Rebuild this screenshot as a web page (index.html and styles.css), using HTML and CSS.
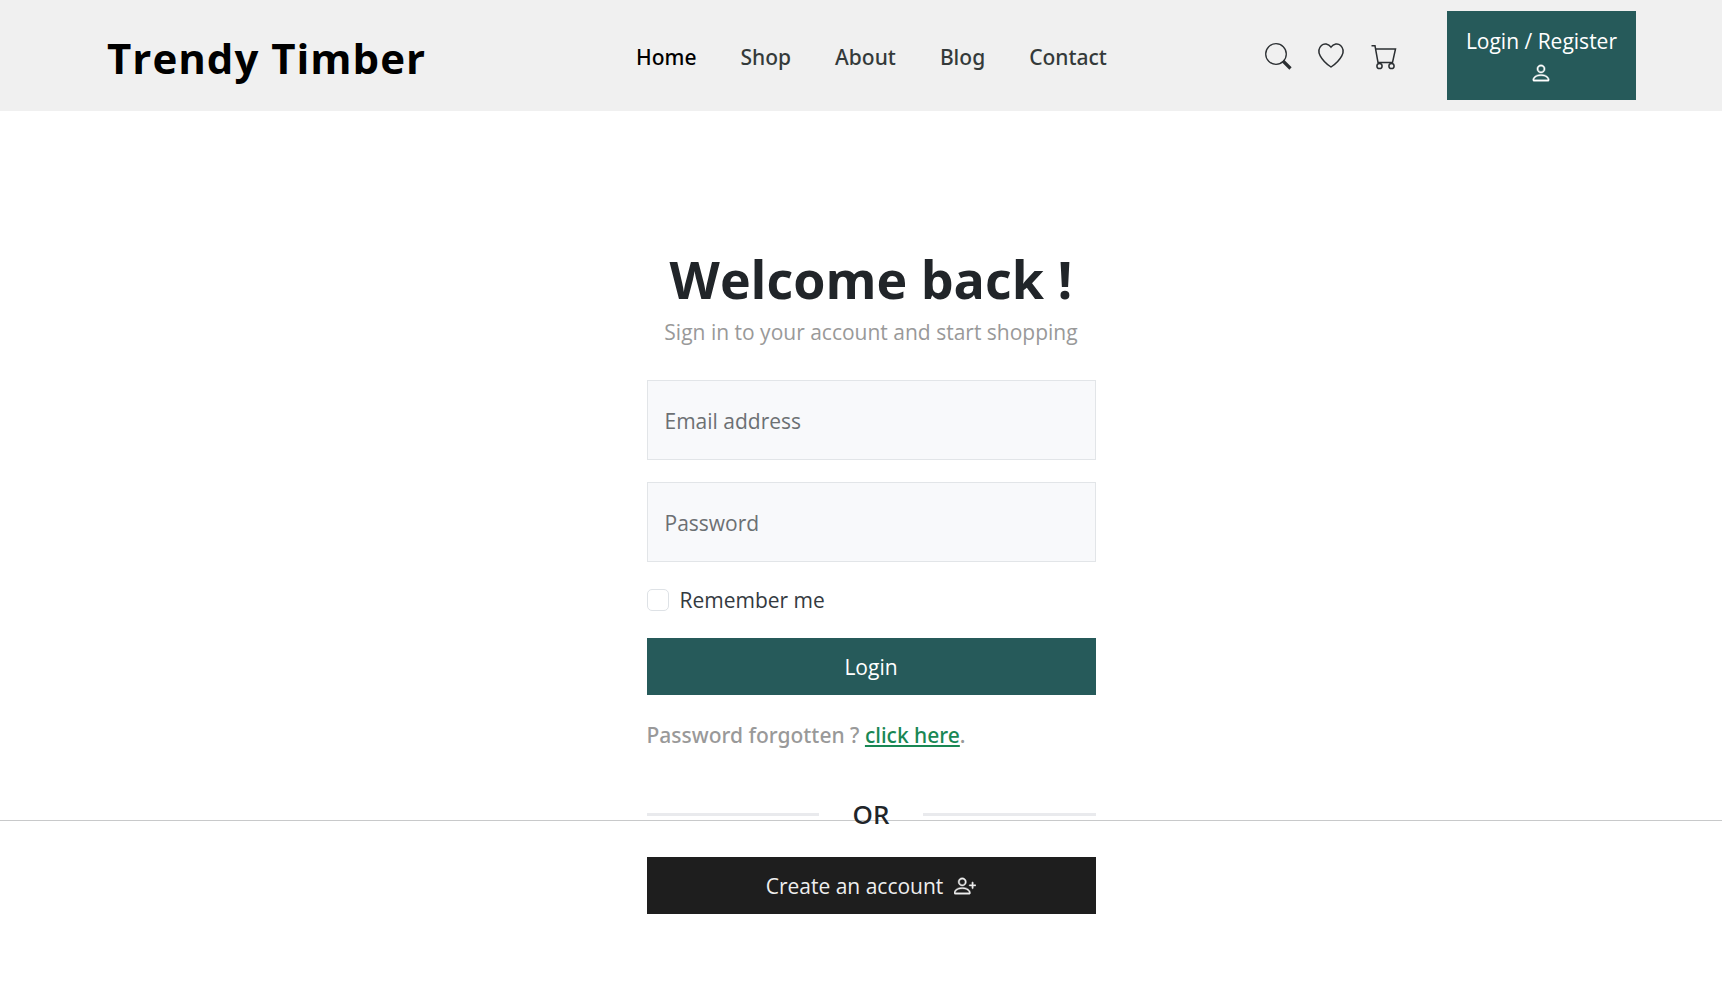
FILE: index.html
```html
<!DOCTYPE html>
<html lang="en">
<head>
<meta charset="utf-8">
<meta name="viewport" content="width=device-width, initial-scale=1">
<title>Trendy Timber - Login</title>
<link rel="stylesheet" href="styles.css">
</head>
<body>
<header class="site-header">
  <a class="brand" href="#">Trendy Timber</a>
  <nav class="nav" aria-label="Main">
    <a class="nav-link active" href="#">Home</a>
    <a class="nav-link" href="#">Shop</a>
    <a class="nav-link" href="#">About</a>
    <a class="nav-link" href="#">Blog</a>
    <a class="nav-link" href="#">Contact</a>
  </nav>
  <div class="actions">
    <a class="icon-link" href="#" aria-label="Search"><svg class="icon" viewBox="0 0 26 26" fill="none" stroke="currentColor"><circle cx="11" cy="11" r="10.300" stroke-width="1.300"/><path d="M18 18l7.500 7.500" stroke-width="3.200"/></svg></a>
    <a class="icon-link" href="#" aria-label="Wishlist"><svg class="icon" viewBox="0 0 26 26" fill="none" stroke="currentColor" stroke-width="1.5"><path d="M13 4.200C10.500.500 6 0 3.400 2.500.500 5.300.300 9.400 2.200 12.800 4.200 16.500 8.500 21 13 24c4.500-3 8.800-7.500 10.800-11.200 1.900-3.400 1.700-7.500-1.200-10.300C20 0 15.500.500 13 4.200z"/></svg></a>
    <a class="icon-link" href="#" aria-label="Cart"><svg class="icon" viewBox="0 0 26 26" fill="none" stroke="currentColor" stroke-width="1.500"><path d="M.500 2.800h3.500l3 16.700H21.500l3-13.500H5"/><circle cx="8.500" cy="23" r="2.600"/><circle cx="20.500" cy="23" r="2.600"/></svg></a>
  </div>
  <a class="login-link" href="#">Login / Register
    <svg class="person" viewBox="0 0 16 16" fill="currentColor" aria-hidden="true"><path d="M8 8a3 3 0 1 0 0-6 3 3 0 0 0 0 6m2-3a2 2 0 1 1-4 0 2 2 0 0 1 4 0m4 8c0 1-1 1-1 1H3s-1 0-1-1 1-4 6-4 6 3 6 4m-1-.004c-.001-.246-.154-.986-.832-1.664C11.516 10.680 10.289 10 8 10s-3.516.680-4.168 1.332c-.678.678-.830 1.418-.832 1.664z"/></svg>
  </a>
</header>
<main class="main">
  <form class="login-form">
    <h1 class="title">Welcome back !</h1>
    <p class="subtitle">Sign in to your account and start shopping</p>
    <input class="field" type="email" placeholder="Email address" aria-label="Email address">
    <input class="field" type="password" placeholder="Password" aria-label="Password">
    <label class="remember"><input class="check" type="checkbox">Remember me</label>
    <button class="btn btn-primary" type="submit">Login</button>
    <p class="forgot">Password forgotten ? <a class="forgot-link" href="#">click here</a>.</p>
    <div class="divider"><span class="page-rule"></span>OR</div>
    <button class="btn btn-dark" type="button">Create an account
      <svg class="person" viewBox="0 0 16 16" fill="currentColor" aria-hidden="true"><path d="M6 8a3 3 0 1 0 0-6 3 3 0 0 0 0 6m2-3a2 2 0 1 1-4 0 2 2 0 0 1 4 0m4 8c0 1-1 1-1 1H1s-1 0-1-1 1-4 6-4 6 3 6 4m-1-.004c-.001-.246-.154-.986-.832-1.664C9.516 10.680 8.289 10 6 10s-3.516.680-4.168 1.332c-.678.678-.830 1.418-.832 1.664z"/><path d="M13.500 5a.5.5 0 0 1 .5.5V7h1.500a.5.5 0 0 1 0 1H14v1.500a.5.5 0 0 1-1 0V8h-1.500a.5.5 0 0 1 0-1H13V5.500a.5.5 0 0 1 .5-.5"/></svg>
    </button>
  </form>
</main>
</body>
</html>
```
FILE: styles.css
```css
* { box-sizing: border-box; }

body {
  margin: 0;
  background: #fff;
  color: #212529;
  font: 400 21px/32px "Open Sans", "Noto Sans", sans-serif;
}

a { color: inherit; text-decoration: none; }

.site-header {
  display: flex;
  align-items: center;
  background: #f0f0f0;
  padding: 11px 86px 11px 107px;
}

.brand {
  padding-top: 4px;
  color: #000;
  font-size: 42px;
  font-weight: 700;
  line-height: 64px;
  letter-spacing: 1px;
}

.nav {
  flex: 1;
  display: flex;
  justify-content: center;
  gap: 44px;
  padding: 2px 0 0 52px;
}

.nav-link {
  color: #343a3a;
  font-family: "Noto Sans", sans-serif;
  font-weight: 500;
}

.nav-link.active { color: #000; }

.actions {
  display: flex;
  gap: 27px;
  margin-right: 50px;
  color: #2b2f32;
}

.icon-link { display: flex; }
.icon { width: 26px; height: 26px; overflow: visible; }

.login-link {
  display: flex;
  flex-direction: column;
  align-items: center;
  gap: 5px;
  padding: 14px 19px 16px;
  background: #265a5a;
  color: #fff;
}

.person {
  width: 22px;
  height: 22px;
  stroke: currentColor;
  stroke-width: 0.3;
}

.main {
  position: relative;
  padding: 135px 20px 86px 40px;
}

.login-form {
  display: flex;
  flex-direction: column;
  max-width: 449px;
  margin: 0 auto;
}

.title {
  margin: 0;
  font-size: 52px;
  font-weight: 700;
  line-height: 66px;
  text-align: center;
}

.subtitle {
  margin: 4px 0 32px;
  color: #999;
  text-align: center;
}

.field {
  width: 100%;
  height: 80px;
  margin: 0 0 22px;
  padding: 2px 17px 0;
  border: 1px solid #e2e5e8;
  border-radius: 0;
  background: #f8f9fb;
  color: #212529;
  font: inherit;
}

.field::placeholder { color: #6c7073; opacity: 1; }

.remember {
  display: flex;
  align-items: center;
  gap: 11px;
  margin: 0 0 22px;
  color: #343a40;
}

.check {
  appearance: none;
  width: 22px;
  height: 22px;
  margin: 0;
  border: 1px solid #dee2e6;
  border-radius: 5px;
  background: #fff;
}

.check:checked { background: #265a5a; }

.btn {
  display: flex;
  align-items: center;
  justify-content: center;
  gap: 11px;
  width: 100%;
  padding: 13px 16px 12px;
  border: 0;
  color: #fff;
  font: inherit;
}

.btn-primary { background: #265a5a; }
.btn-dark { background: #1e1e1e; color: #eee; }

.forgot {
  margin: 24px 0 47px;
  color: #999;
  font-family: "Noto Sans", sans-serif;
  font-weight: 500;
}

.forgot-link { color: #198754; text-decoration: underline; }

.divider {
  display: flex;
  align-items: center;
  gap: 34px;
  margin-bottom: 27px;
  font-family: "Noto Sans", sans-serif;
  font-size: 26px;
  font-weight: 500;
}

.divider::before,
.divider::after {
  content: "";
  flex: 1;
  height: 3px;
  background: #e9eaed;
}

/* Full-width rule that crosses the page behind the form */
.page-rule {
  position: absolute;
  left: 0;
  right: 0;
  z-index: -1;
  margin-top: 12px;
  border-top: 1px solid #c8c9ca;
}
```
